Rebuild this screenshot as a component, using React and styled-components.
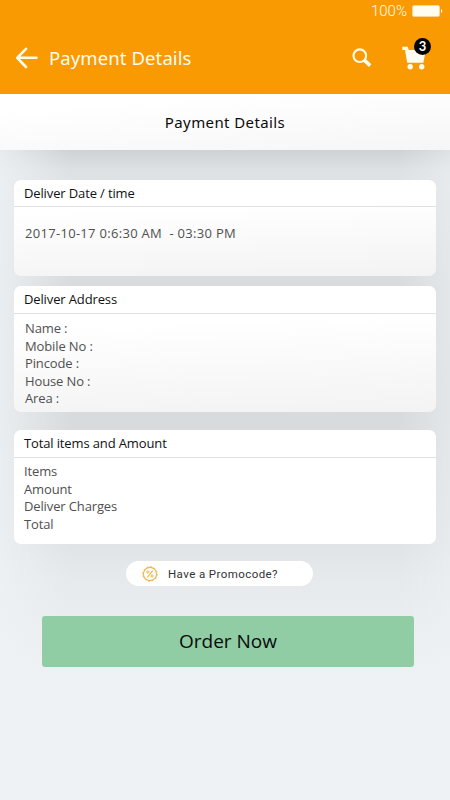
import React from "react";
import styled, { createGlobalStyle } from "styled-components";

const GlobalStyle = createGlobalStyle`
  * {
    box-sizing: border-box;
  }

  body {
    margin: 0;
    background: #eef2f5;
    font-family: "Open Sans", "Noto Sans", sans-serif;
  }
`;

const Screen = styled.div`
  width: 450px;
  height: 800px;
  display: flex;
  flex-direction: column;
  overflow: hidden;
`;

const Header = styled.header`
  height: 94px;
  background: #fa9a02;
  color: #fffdf0;
`;

const StatusBar = styled.div`
  height: 22px;
  padding: 0 7px 0 0;
  display: flex;
  justify-content: flex-end;
  align-items: center;
  gap: 5px;
  font-family: Roboto, sans-serif;
  font-size: 15px;
  font-weight: 300;
`;

const Nav = styled.nav`
  height: 72px;
  padding: 0 23px 0 15px;
  display: flex;
  align-items: center;
`;

const NavTitle = styled.h1`
  margin: 0 auto 0 10px;
  font-family: "Noto Sans", sans-serif;
  font-size: 18.5px;
  font-weight: 400;
  line-height: 26px;
  letter-spacing: 0.1px;
`;

const CartButton = styled.div`
  position: relative;
  display: flex;
  margin-left: 30px;
`;

const Badge = styled.span`
  position: absolute;
  top: -8px;
  left: 12px;
  width: 17px;
  height: 17px;
  border-radius: 50%;
  background: #000;
  color: #fff;
  font-family: Lato, sans-serif;
  font-size: 13px;
  font-weight: 700;
  line-height: 17px;
  text-align: center;
`;

const SubHeader = styled.div`
  height: 56px;
  flex-shrink: 0;
  display: flex;
  align-items: center;
  justify-content: center;
  background: linear-gradient(176deg, #fff 20%, #f6f6f6);
  color: #0b0b0b;
  font-family: "Noto Sans", sans-serif;
  font-size: 15px;
  letter-spacing: 0.4px;
`;

const Content = styled.main`
  flex: 1;
  padding: 30px 14px 0;
  display: flex;
  flex-direction: column;
  background:
    linear-gradient(90deg, rgba(238, 242, 245, 0.8), rgba(238, 242, 245, 0) 70px),
    linear-gradient(270deg, rgba(238, 242, 245, 0.5), rgba(238, 242, 245, 0) 50px),
    linear-gradient(
      180deg,
      #ced2d5 0,
      #dde1e4 20px,
      #dfe3e6 35px,
      #d8dcdf 130px,
      #d8dbdd 270px,
      #dfe3e6 390px,
      #e6eaed 430px,
      #ebeff2 490px,
      #eef2f5 530px
    );
`;

const Card = styled.section`
  width: 422px;
  height: ${({ height }) => height}px;
  margin-bottom: ${({ gap }) => gap}px;
  border-radius: 7px;
  background: ${({ shaded }) =>
    shaded ? "linear-gradient(178deg, #fff 30%, #f3f3f3)" : "#fff"};
`;

const CardTitle = styled.h2`
  height: ${({ height }) => height}px;
  margin: 0;
  padding-left: 10px;
  border-bottom: 1px solid #dfe2e4;
  color: #111;
  font-size: 13px;
  font-weight: 400;
  line-height: 27px;
  letter-spacing: -0.13px;
`;

const CardBody = styled.div`
  padding: ${({ top }) => top}px 0 0 ${({ left }) => left}px;
  color: #505050;
  font-size: 13px;
  line-height: 17.5px;
  white-space: pre;
`;

const Line = styled.div`
  letter-spacing: ${({ spacing }) => spacing || -0.13}px;
`;

const Promo = styled.button`
  width: 187px;
  height: 25px;
  margin: 0 0 30px 112px;
  padding: 0 0 0 16px;
  display: flex;
  align-items: center;
  gap: 10px;
  border: 0;
  border-radius: 13px;
  background: #fff;
  color: #333;
  font-family: Roboto, sans-serif;
  font-size: 11.5px;
  letter-spacing: 0.42px;
`;

const OrderButton = styled.button`
  width: 372px;
  height: 51px;
  margin-left: 28px;
  padding: 0 0 2px;
  border: 0;
  border-radius: 3px;
  background: #90cda5;
  color: #0a0a0a;
  font-family: "Open Sans", sans-serif;
  font-size: 19px;
`;

const BatteryIcon = () => (
  <svg width="31" height="12" viewBox="0 0 31 12">
    <rect x="0.5" y="0.5" width="27" height="11" rx="1.5" fill="#fffdf0" stroke="#fdd493" />
    <path d="M29 4c1.8.6 1.8 3.4 0 4z" fill="#fffdf0" />
  </svg>
);

const BackIcon = () => (
  <svg width="24" height="22" viewBox="0 0 24 22" fill="none" stroke="#fffdf0" strokeWidth="2.6" strokeLinecap="round" strokeLinejoin="round">
    <path d="M11 1.8 2.2 10.8 11 20M2.5 10.8H21.5" />
  </svg>
);

const SearchIcon = () => (
  <svg width="20" height="20" viewBox="0 0 20 20" fill="none" stroke="#fffdf0">
    <circle cx="7.8" cy="7.7" r="6.3" strokeWidth="2.1" />
    <path d="m12.3 12.1 5.9 5.5" strokeWidth="3.6" />
  </svg>
);

const CartIcon = () => (
  <svg width="25" height="24" viewBox="0 0 25 24" fill="#fffdf0">
    <path d="M.3.8h5.4l1 3.2h17.2L21.3 16.7H5.2L3 4H.3z" />
    <circle cx="8.2" cy="20.8" r="2.7" />
    <circle cx="19.7" cy="20.8" r="2.7" />
  </svg>
);

const PercentIcon = () => (
  <svg width="16" height="16" viewBox="0 0 16 16" fill="none" stroke="#ecb84c">
    <circle cx="8" cy="8" r="6.6" strokeWidth="1.1" />
    <circle cx="8" cy="8" r="7.2" strokeWidth="1" strokeDasharray="1.9 1.87" />
    <path d="M10.7 4.7 5.3 11.3" strokeWidth="1.1" />
    <circle cx="5.9" cy="6" r="1.1" />
    <circle cx="10.1" cy="10" r="1.1" />
  </svg>
);

const addressLines = ["Name :", "Mobile No :", "Pincode :", "House No :", "Area :"];

const totalLines = ["Items", "Amount", "Deliver Charges", "Total"];

const App = () => {
  return (
    <>
      <GlobalStyle />
      <Screen>
        <Header>
          <StatusBar>
            <span>100%</span>
            <BatteryIcon />
          </StatusBar>
          <Nav>
            <BackIcon />
            <NavTitle>Payment Details</NavTitle>
            <SearchIcon />
            <CartButton>
              <CartIcon />
              <Badge>3</Badge>
            </CartButton>
          </Nav>
        </Header>
        <SubHeader>Payment Details</SubHeader>
        <Content>
          <Card height={96} gap={10} shaded>
            <CardTitle height={27}>Deliver Date / time</CardTitle>
            <CardBody top={18} left={11}>
              <Line spacing={0.3}>2017-10-17 0:6:30 AM  - 03:30 PM</Line>
            </CardBody>
          </Card>
          <Card height={126} gap={18} shaded>
            <CardTitle height={28}>Deliver Address</CardTitle>
            <CardBody top={6} left={11}>
              {addressLines.map((line) => (
                <Line key={line}>{line}</Line>
              ))}
            </CardBody>
          </Card>
          <Card height={114} gap={17}>
            <CardTitle height={28}>Total items and Amount</CardTitle>
            <CardBody top={5} left={10}>
              {totalLines.map((line) => (
                <Line key={line}>{line}</Line>
              ))}
            </CardBody>
          </Card>
          <Promo>
            <PercentIcon />
            <span>Have a Promocode?</span>
          </Promo>
          <OrderButton>Order Now</OrderButton>
        </Content>
      </Screen>
    </>
  );
};

export default App;
